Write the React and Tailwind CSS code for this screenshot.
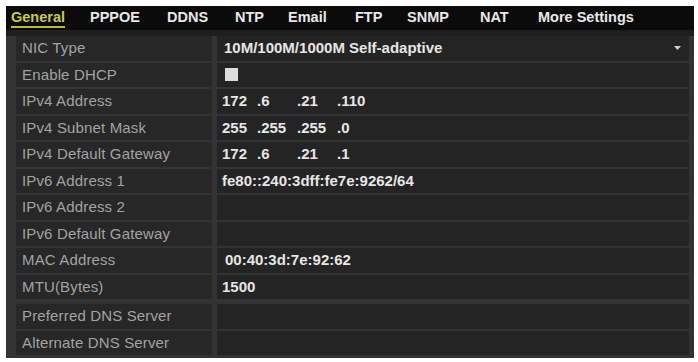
import React from 'react';

const tabs = [
  { name: 'General', x: 11 },
  { name: 'PPPOE', x: 90 },
  { name: 'DDNS', x: 167 },
  { name: 'NTP', x: 235 },
  { name: 'Email', x: 288 },
  { name: 'FTP', x: 355 },
  { name: 'SNMP', x: 407 },
  { name: 'NAT', x: 480 },
  { name: 'More Settings', x: 538 },
];

function IpValue({ parts }) {
  const widths = ['w-[35px]', 'w-[40px]', 'w-[40px]', 'w-[40px]'];
  return (
    <div className="flex">
      {parts.map((p, i) => (
        <span key={i} className={widths[i]}>
          {p}
        </span>
      ))}
    </div>
  );
}

function Row({ label, children }) {
  return (
    <div className="flex h-[24.5px] gap-[5px]">
      <div className="flex w-[196px] items-center bg-[#272727] pl-[6px] text-[15px] tracking-[0.15px] text-[#a3a3a3]">
        {label}
      </div>
      <div className="flex flex-1 items-center bg-[#242424] pl-[5px] text-[15px] font-bold text-[#e6e6e6]">
        {children}
      </div>
    </div>
  );
}

export default function App() {
  return (
    <div
      className="h-[362px] w-[698px] overflow-hidden bg-white pl-[6px] pt-[6px]"
      style={{ fontFamily: '"Liberation Sans", Arial, sans-serif' }}
    >
      <div className="w-[688px] bg-[#333333]">
        <div className="relative h-[24px] bg-[#0b0b0b]">
          {tabs.map((t, i) => (
            <span
              key={t.name}
              className={
                'absolute top-[3px] text-[14.5px] font-bold leading-[17px] ' +
                (i === 0
                  ? 'border-b-2 border-[#b9b93a] text-[#c9c94a]'
                  : 'text-[#e8e8e8]')
              }
              style={{ left: t.x - 6 }}
            >
              {t.name}
            </span>
          ))}
        </div>
        <div className="h-[6px] bg-[#1e1e1e]" />
        <div className="flex flex-col gap-[2px] pl-[10px] pr-[5px]">
          <Row label="NIC Type">
            <div className="flex w-full items-center justify-between pr-[8px] pl-[2px]">
              <span>10M/100M/1000M Self-adaptive</span>
              <svg width="7" height="5" viewBox="0 0 7 5">
                <path d="M0 0 L7 0 L3.5 4 Z" fill="#d0d0d0" />
              </svg>
            </div>
          </Row>
          <Row label="Enable DHCP">
            <span className="ml-[3px] block h-[13px] w-[13px] bg-[#dcdcdc]" />
          </Row>
          <Row label="IPv4 Address">
            <IpValue parts={['172', '.6', '.21', '.110']} />
          </Row>
          <Row label="IPv4 Subnet Mask">
            <IpValue parts={['255', '.255', '.255', '.0']} />
          </Row>
          <Row label="IPv4 Default Gateway">
            <IpValue parts={['172', '.6', '.21', '.1']} />
          </Row>
          <Row label="IPv6 Address 1">fe80::240:3dff:fe7e:9262/64</Row>
          <Row label="IPv6 Address 2"></Row>
          <Row label="IPv6 Default Gateway"></Row>
          <Row label="MAC Address">
            <span className="pl-[3px]">00:40:3d:7e:92:62</span>
          </Row>
          <Row label="MTU(Bytes)">1500</Row>
          <div className="h-[1px]" />
          <Row label="Preferred DNS Server"></Row>
          <Row label="Alternate DNS Server"></Row>
          <div className="h-[1px]" />
        </div>
      </div>
    </div>
  );
}
